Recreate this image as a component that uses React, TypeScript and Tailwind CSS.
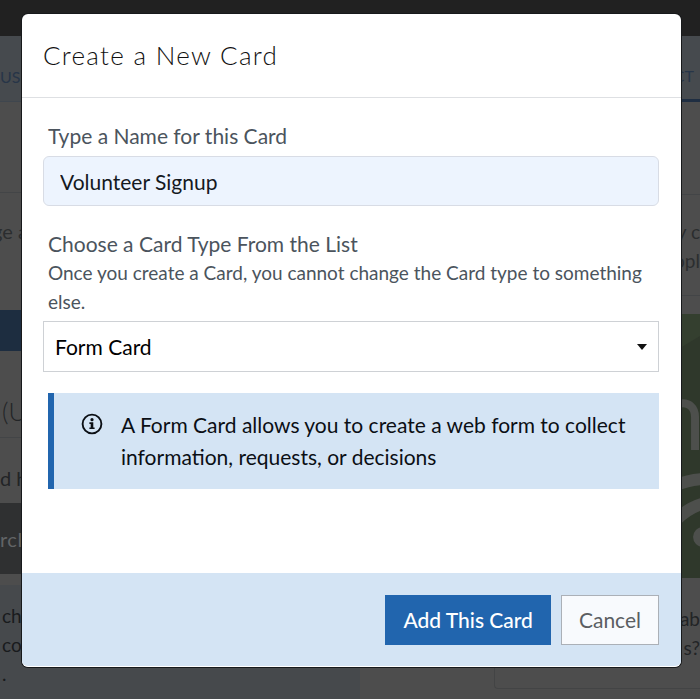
import { useState } from "react";
import type { ReactNode } from "react";

const cardTypes = ["Form Card"];

function Crop({ className, children }: { className: string; children?: ReactNode }) {
  return <div className={`overflow-hidden whitespace-nowrap ${className}`}>{children}</div>;
}

function InfoIcon() {
  return (
    <svg viewBox="0 0 22 22" className="h-[22px] w-[22px] shrink-0" aria-hidden="true">
      <circle cx="11" cy="11" r="9.4" fill="none" stroke="#0b0f14" strokeWidth="1.9" />
      <circle cx="11" cy="6.7" r="1.6" fill="#0b0f14" />
      <path d="M8.4 9.3h3.9v5.1h1.3v1.7H8.4v-1.7h1.3V11H8.4z" fill="#0b0f14" />
    </svg>
  );
}

function Backdrop() {
  return (
    <div className="flex min-h-screen flex-col bg-[#4d4d4d] text-[#222426]" aria-hidden="true">
      <div className="h-9 bg-[#212121]" />
      <div className="flex h-[66px] items-stretch justify-between bg-[#464a4e] text-base text-[#273548]">
        <Crop className="flex items-center border-b border-[#3f464e] pt-4">USI</Crop>
        <Crop className="flex items-center border-b-3 border-[#1f2e42] pt-4 pr-1.5">CT</Crop>
      </div>
      <div className="flex flex-1 justify-between">
        <div className="flex w-[360px] flex-col">
          <Crop className="h-[91px] border-b border-[#434547]" />
          <Crop className="h-[117px] pt-6 -indent-2 text-xl leading-7 text-[#2b2d2f]">ge a</Crop>
          <div className="h-[41px] bg-[#1d2d40]" />
          <Crop className="h-[87px] border-b border-[#434547] pt-11 pl-0.5 text-[25px] leading-8 font-light">(U</Crop>
          <Crop className="h-[65px] pt-[26px] text-xl leading-7">d h</Crop>
          <Crop className="flex h-[71px] items-center bg-[#2f3031] text-xl tracking-wide text-[#626466]">rcl</Crop>
          <Crop className="mt-[11px] flex-1 bg-[#46494c] pt-4 pl-0.5 text-[19px] leading-[29px] text-[#191b1d]">
            <p>ch</p>
            <p>co</p>
            <p>.</p>
          </Crop>
        </div>
        <div className="mb-2.5 flex w-[206px] flex-col rounded-bl border-b border-l border-[#434445]">
          <Crop className="h-[93px] border-b border-[#434547]" />
          <Crop className="h-[101px] border-b border-[#434547] pt-[22px] text-right text-[19px] leading-[29px] text-[#2b2d2f]">
            <p>y c</p>
            <p>opl</p>
          </Crop>
          <svg viewBox="0 0 206 264" className="mt-[18px] h-[264px] w-full" preserveAspectRatio="none">
            <rect width="206" height="264" fill="#2f382b" />
            <path d="M186 0h20v22l-20 12z" fill="#343f2f" />
            <path d="M184 90C195 87 201 94 201 103V136" fill="none" stroke="#4d4f4c" strokeWidth="8" />
            <path d="M182 171Q194 166 208 165" fill="none" stroke="#4d4f4c" strokeWidth="12" />
            <path d="M182 206Q194 194 208 190" fill="none" stroke="#4d4f4c" strokeWidth="12" />
            <circle cx="209" cy="223" r="10" fill="#4d4f4c" />
          </svg>
          <Crop className="flex-1 pt-[26px] text-right text-[19px] leading-[29px]">
            <p>e ab</p>
            <p>s?</p>
          </Crop>
        </div>
      </div>
    </div>
  );
}

export default function App() {
  const [name, setName] = useState("Volunteer Signup");
  return (
    <div className="relative min-h-screen overflow-hidden font-[Lato,'Open_Sans',sans-serif]">
      <Backdrop />
      <div className="absolute inset-0 pt-3.5 pr-[19px] pb-8 pl-[22px]">
        <form
          role="dialog"
          aria-labelledby="dialog-title"
          onSubmit={(e) => e.preventDefault()}
          className="flex h-full flex-col overflow-hidden rounded-md border-b border-white bg-white shadow-[0_0_0_1px_#17191b]"
        >
          <header className="border-b border-[#dee0e3] px-[21px] py-6">
            <h1 id="dialog-title" className="text-[26px] leading-[35px] font-light tracking-wider text-[#111]">
              Create a New Card
            </h1>
          </header>
          <div className="flex-1 pt-6 pr-[22px] pl-[21px] text-[21px]">
            <label htmlFor="card-name" className="block px-[5px] leading-7 text-[#4b545d]">
              Type a Name for this Card
            </label>
            <input
              id="card-name"
              value={name}
              onChange={(e) => setName(e.target.value)}
              className="mt-[6px] block h-[50px] w-full rounded-md border border-[#d8dce5] bg-[#edf4fe] px-4 text-[#15191e] outline-none"
            />
            <label htmlFor="card-type" className="mt-6 block px-[5px] leading-7 text-[#4b545d]">
              Choose a Card Type From the List
            </label>
            <p id="type-help" className="px-[5px] text-[19px] leading-[29px] text-[#4b545d]">
              Once you create a Card, you cannot change the Card type to something else.
            </p>
            <div className="relative mt-[5px]">
              <select
                id="card-type"
                aria-describedby="type-help"
                className="block h-[51px] w-full appearance-none border border-[#ced1d5] bg-white px-[11px] text-black outline-none"
              >
                {cardTypes.map((t) => (
                  <option key={t}>{t}</option>
                ))}
              </select>
              <svg viewBox="0 0 10 6" className="pointer-events-none absolute top-[23px] right-3 h-1.5 w-2.5" aria-hidden="true">
                <path d="M0 0h10L5 6z" fill="#111" />
              </svg>
            </div>
            <div className="mt-[21px] ml-[5px] flex gap-[18px] border-l-6 border-[#2165ae] bg-[#d4e4f4] py-4 pr-4 pl-[27px] leading-8 text-[#0b0f14]">
              <span className="pt-1">
                <InfoIcon />
              </span>
              <p>A Form Card allows you to create a web form to collect information, requests, or decisions</p>
            </div>
          </div>
          <footer className="flex justify-end gap-2.5 bg-[#d4e4f4] px-[22px] pt-[22px] pb-[21px] text-[21px]">
            <button type="submit" className="h-[50px] bg-[#2165ae] px-[18px] font-medium text-white">
              Add This Card
            </button>
            <button type="button" className="h-[50px] border border-[#abb0b7] bg-[#f8fafd] px-[17px] text-[#5b5e62]">
              Cancel
            </button>
          </footer>
        </form>
      </div>
    </div>
  );
}
